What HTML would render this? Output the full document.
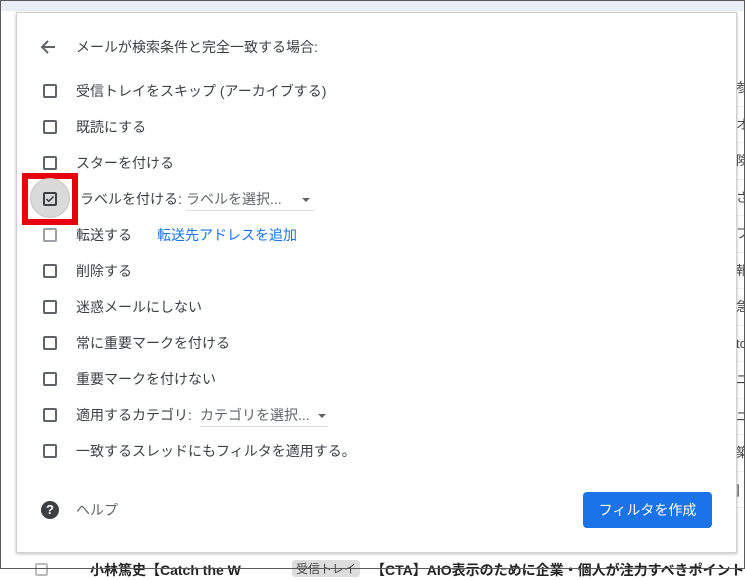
<!DOCTYPE html>
<html><head><meta charset="utf-8"><style>
*{margin:0;padding:0;box-sizing:border-box}
html,body{width:745px;height:569px;overflow:hidden;background:#fff;font-family:"Liberation Sans","Noto Sans CJK JP",sans-serif}
.frame{position:absolute;left:0;top:0;width:745px;height:569px;border:1px solid #5a5a5a;z-index:10;pointer-events:none}
.topbg{position:absolute;left:1px;top:1px;width:743px;height:10px;background:#e9eef6}
.side{position:absolute;left:736px;top:70px;width:9px;font-size:13px;color:#444;overflow:hidden}
.side div{height:36.5px;border-bottom:1px solid #eee;line-height:36px;white-space:nowrap}
.dlg{position:absolute;left:16px;top:12px;width:721px;height:541px;background:#fff;border:1px solid #d0d0d0;box-shadow:0 1px 3px rgba(0,0,0,.25)}
.t{position:absolute;font-size:14px;color:#3c4043;white-space:nowrap;line-height:18px;margin-top:1px}
.cb{position:absolute;left:43px;width:14px;height:14px;border:2px solid #5f6368;border-radius:2px;margin-top:1px}
.dd{position:absolute;font-size:14px;color:#5f6368;border-bottom:1px solid #dadce0;line-height:18px;padding-bottom:2px;white-space:nowrap;margin-top:1px}
.dd i{display:inline-block;width:0;height:0;border-left:4px solid transparent;border-right:4px solid transparent;border-top:4px solid #5f6368;vertical-align:middle;margin-left:8px}
.btn{position:absolute;left:583px;top:492px;width:129px;height:36px;background:#1a73e8;border-radius:4px;color:#fff;font-size:14px;text-align:center;line-height:36px}
.bottom{position:absolute;top:560px;font-size:14px;color:#222;white-space:nowrap;font-weight:bold}
</style></head><body>
<div class="frame"></div>
<div class="topbg"></div>
<div class="side"><div>参</div><div>オ</div><div>険</div><div>さ</div><div>フ</div><div>報</div><div>急</div><div>to</div><div>ニ</div><div>ニ</div><div>築</div><div>]</div></div>
<div style="position:absolute;left:35px;top:563px;width:13px;height:13px;border:2px solid #bbb;border-radius:2px"></div>
<div class="bottom" style="left:90px">小林篤史【Catch the W</div>
<div class="bottom" style="left:292px;background:#ddd;font-weight:normal;font-size:12px;padding:0 4px;border-radius:3px;color:#444">受信トレイ</div>
<div class="bottom" style="left:371px">【CTA】AIO表示のために企業・個人が注力すべきポイント</div>
<div class="dlg"></div>
<svg style="position:absolute;left:40px;top:39px" width="16" height="16" viewBox="0 0 16 16"><path d="M15 8H2M8 2L2 8l6 6" stroke="#5f6368" stroke-width="2" fill="none"/></svg>
<div class="t" style="left:76px;top:37px">メールが検索条件と完全一致する場合:</div>

<div class="cb" style="top:83px"></div><div class="t" style="left:76px;top:81px">受信トレイをスキップ (アーカイブする)</div>
<div class="cb" style="top:119px"></div><div class="t" style="left:76px;top:117px">既読にする</div>
<div class="cb" style="top:155px"></div><div class="t" style="left:76px;top:153px">スターを付ける</div>
<div style="position:absolute;left:22px;top:173px;width:56px;height:52px;border:6px solid #e8000d"></div>
<div style="position:absolute;left:30px;top:178px;width:40px;height:40px;border-radius:50%;background:#dadada;border:1px solid #c8c8c8"></div>
<div class="cb" style="top:191px;border-color:#3c4043"></div>
<svg style="position:absolute;left:45px;top:194px" width="10" height="10" viewBox="0 0 10 10"><path d="M1.5 5l2.3 2.3L8.5 2.5" stroke="#3c4043" stroke-width="1.6" fill="none"/></svg>
<div class="t" style="left:80px;top:189px">ラベルを付ける:</div>
<div class="dd" style="left:186px;top:189px;width:128px">ラベルを選択...<i style="margin-left:20px"></i></div>
<div class="cb" style="top:227px;border-color:#9aa0a6"></div><div class="t" style="left:76px;top:225px">転送する</div>
<div class="t" style="left:157px;top:225px;color:#1a73e8">転送先アドレスを追加</div>
<div class="cb" style="top:263px"></div><div class="t" style="left:76px;top:261px">削除する</div>
<div class="cb" style="top:299px"></div><div class="t" style="left:76px;top:297px">迷惑メールにしない</div>
<div class="cb" style="top:335px"></div><div class="t" style="left:76px;top:333px">常に重要マークを付ける</div>
<div class="cb" style="top:371px"></div><div class="t" style="left:76px;top:369px">重要マークを付けない</div>
<div class="cb" style="top:407px"></div><div class="t" style="left:76px;top:405px">適用するカテゴリ:</div>
<div class="dd" style="left:200px;top:405px;width:128px">カテゴリを選択...<i></i></div>
<div class="cb" style="top:443px"></div><div class="t" style="left:76px;top:441px">一致するスレッドにもフィルタを適用する。</div>

<div style="position:absolute;left:41px;top:501px;width:18px;height:18px;border-radius:50%;background:#3c4043;color:#fff;font-size:13px;font-weight:bold;text-align:center;line-height:18px">?</div>
<div class="t" style="left:76px;top:500px;color:#5f6368">ヘルプ</div>
<div class="btn">フィルタを作成</div>
</body></html>
